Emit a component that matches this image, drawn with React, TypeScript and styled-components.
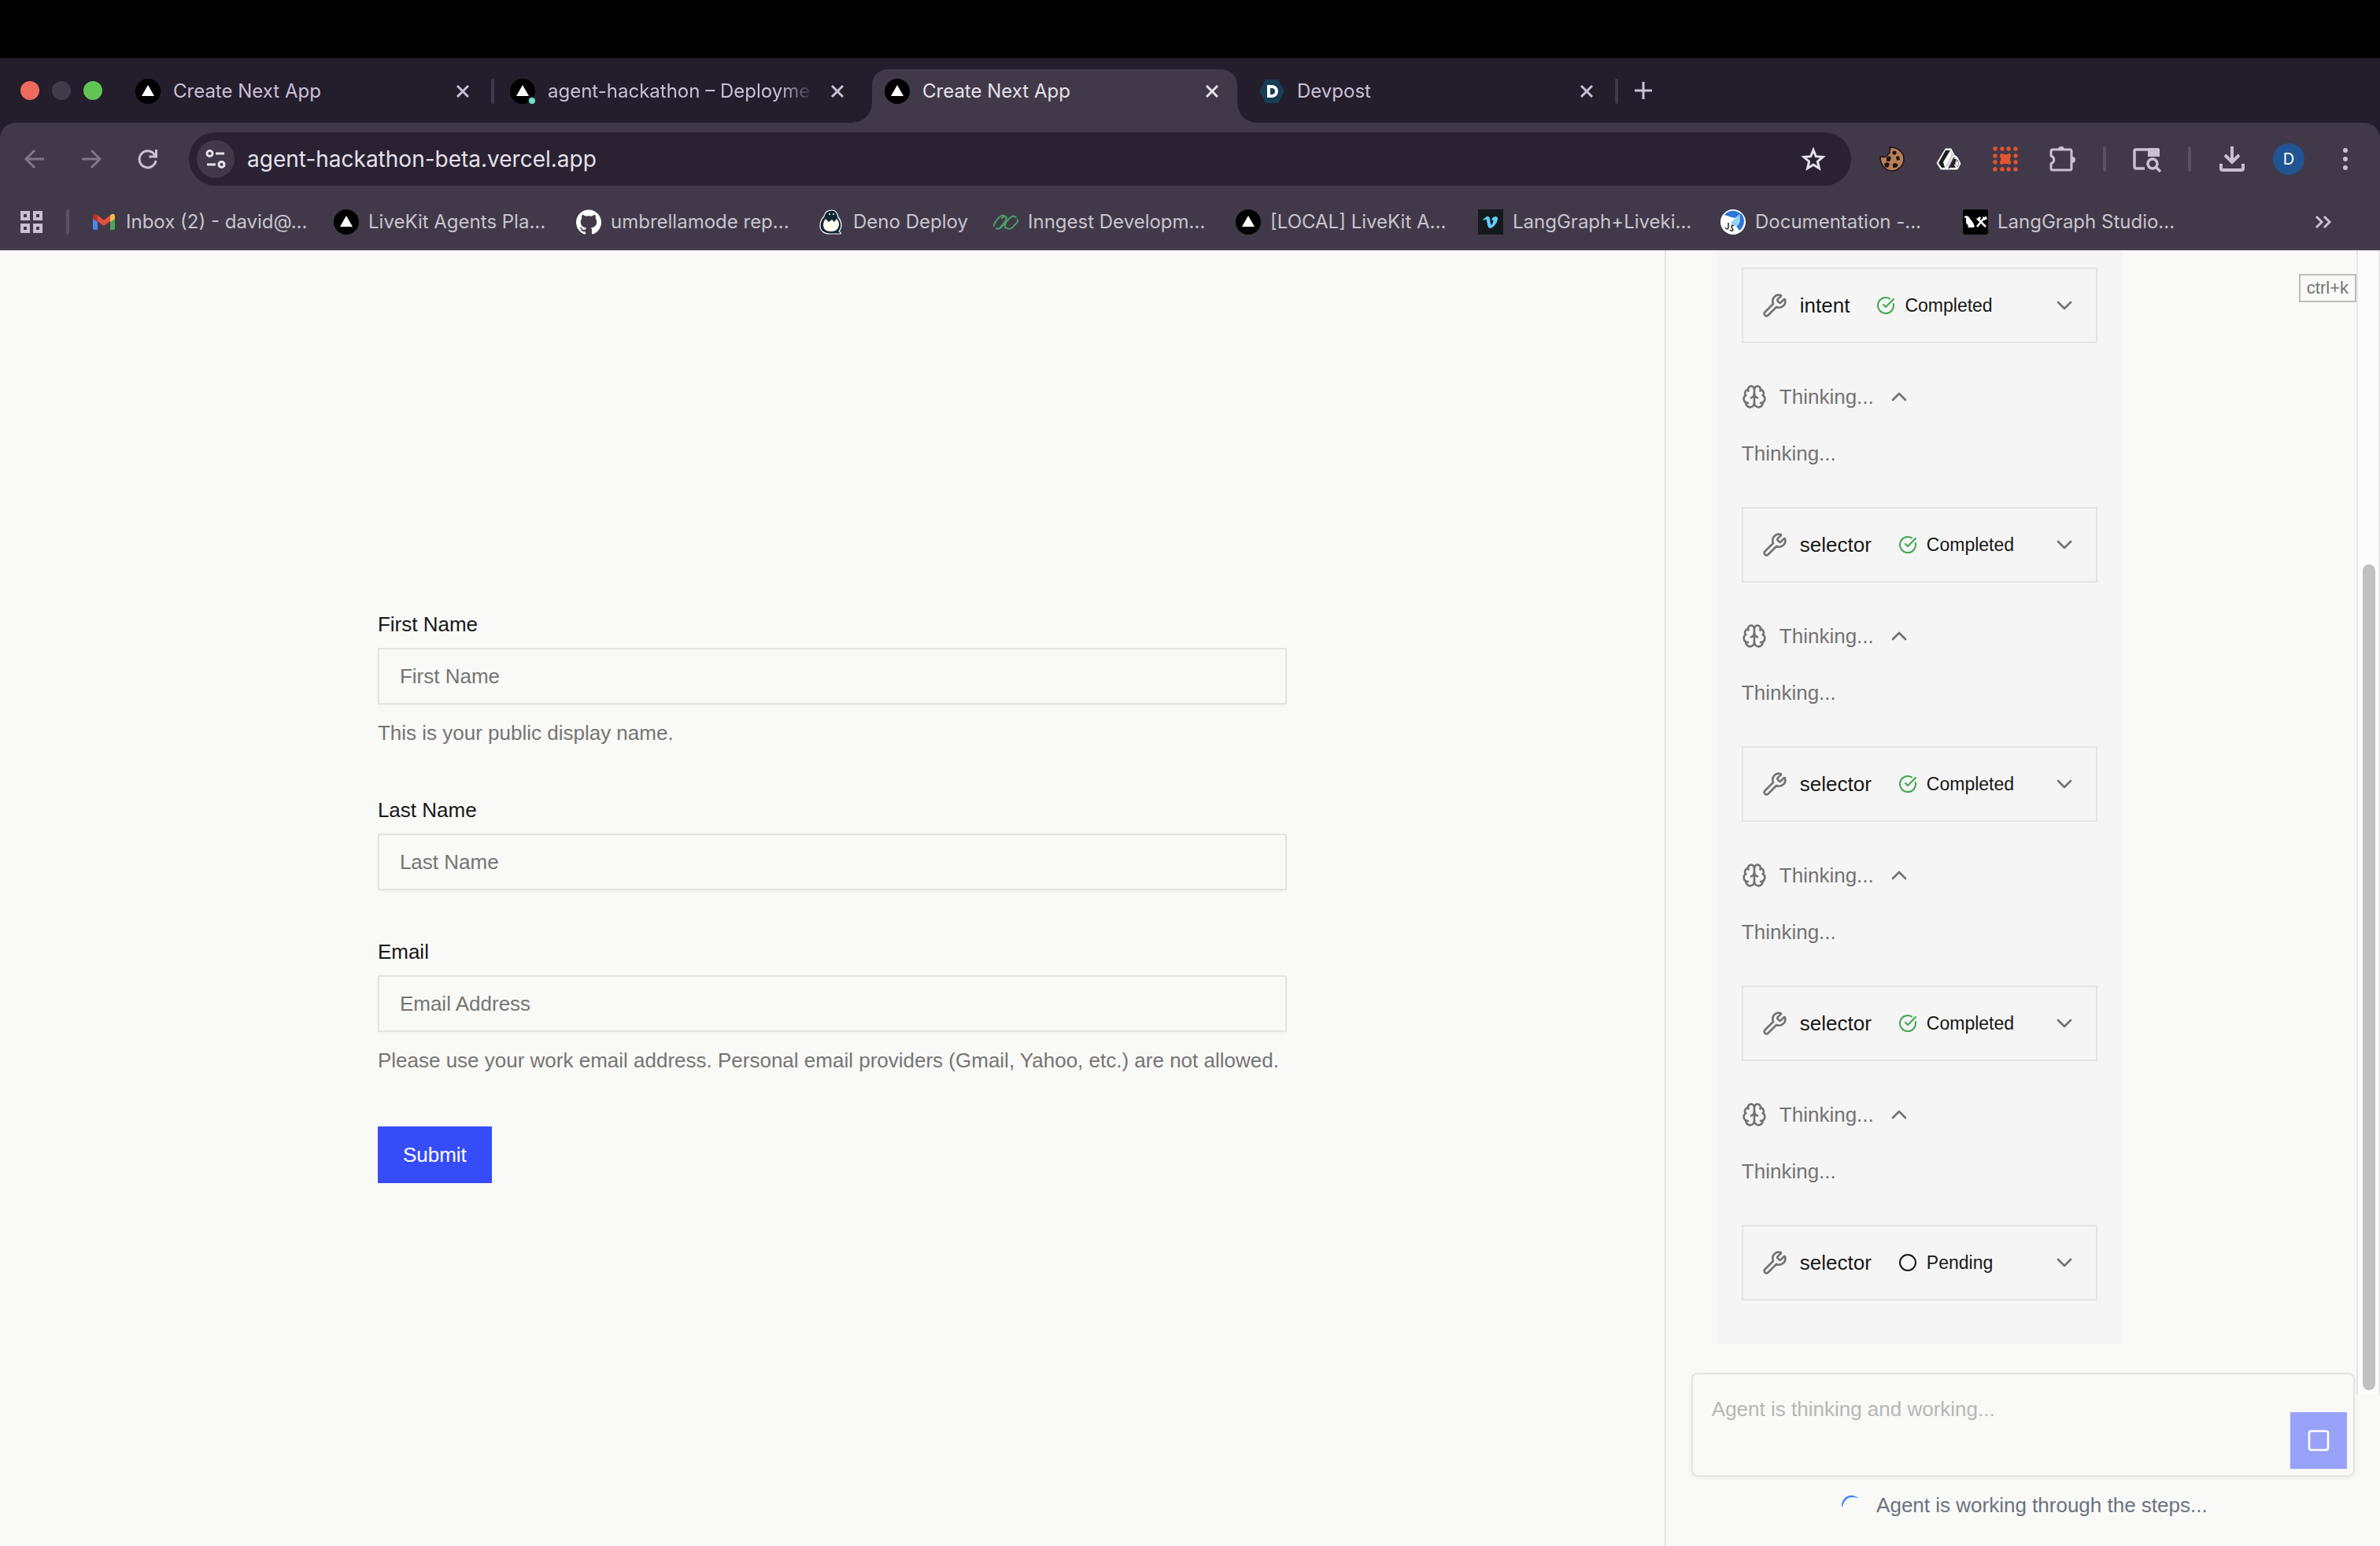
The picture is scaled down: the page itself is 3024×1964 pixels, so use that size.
import React, { ReactNode } from "react";
import styled, { createGlobalStyle, css } from "styled-components";
import { Wrench, Brain, ChevronDown, ChevronUp, CircleCheckBig, Circle, Square } from "lucide-react";
import { SiGithub } from "react-icons/si";

const Global = createGlobalStyle`
  *, *::before, *::after { box-sizing: border-box; }
  html, body, #root { height: 100%; }
  body { margin: 0; background: #f9f9f7; overflow: hidden; }
  button, input, textarea { font: inherit; color: inherit; margin: 0; }
  button { padding: 0; border: 0; background: none; cursor: pointer; }
  svg { display: block; flex: none; }
`;

const Screen = styled.div`
  height: 100vh;
  display: flex;
  flex-direction: column;
  background: #f9f9f7;
`;

/* ---------- browser chrome ---------- */

const MenuBar = styled.div`
  flex: none;
  height: 74px;
  background: #000;
`;

const Chrome = styled.header`
  flex: none;
  background: #241d2c;
  font-family: Inter, "Noto Sans", sans-serif;
  color: #c9c0d6;
`;

const TabStrip = styled.div`
  display: flex;
  height: 82px;
  padding: 14px 0 0 26px;
`;

const Lights = styled.div`
  display: flex;
  gap: 16px;
  width: 130px;
  padding-top: 15px;
`;

const Light = styled.button<{ $color: string }>`
  width: 24px;
  height: 24px;
  border-radius: 50%;
  background: ${(p) => p.$color};
`;

const Tab = styled.div<{ $active?: boolean }>`
  position: relative;
  flex: none;
  display: flex;
  align-items: center;
  gap: 16px;
  width: 464px;
  height: 68px;
  margin-right: 12px;
  padding: 0 24px 12px 16px;
  font-size: 24px;
  line-height: 32px;
  ${(p) =>
    p.$active &&
    css`
      color: #e6e1ea;
      background: #413949;
      border-radius: 20px 20px 0 0;
      &::before,
      &::after {
        content: "";
        position: absolute;
        bottom: 0;
        width: 24px;
        height: 24px;
      }
      &::before {
        left: -24px;
        background: radial-gradient(circle at 0 0, transparent 23px, #413949 24px);
      }
      &::after {
        right: -24px;
        background: radial-gradient(circle at 100% 0, transparent 23px, #413949 24px);
      }
    `}
`;

const TabTitle = styled.span<{ $fade?: boolean }>`
  flex: 1;
  min-width: 0;
  white-space: nowrap;
  ${(p) => p.$fade && css`mask-image: linear-gradient(90deg, #000 86%, transparent 98%);`}
`;

const TabEdge = styled.span`
  position: absolute;
  right: -8px;
  top: 12px;
  width: 4px;
  height: 32px;
  border-radius: 2px;
  background: #413949;
`;

const NewTab = styled.button`
  width: 32px;
  height: 56px;
  margin-left: 12px;
`;

const Toolbar = styled.div`
  display: flex;
  align-items: center;
  height: 92px;
  padding: 0 24px;
  background: #413949;
  border-radius: 20px 20px 0 0;
`;

const NavButtons = styled.div`
  display: flex;
  gap: 32px;
  width: 216px;
`;

const IconButton = styled.button<{ $dim?: boolean }>`
  display: grid;
  place-items: center;
  min-width: 40px;
  height: 40px;
  opacity: ${(p) => (p.$dim ? 0.45 : 1)};
`;

const Omnibox = styled.div`
  flex: 1;
  display: flex;
  align-items: center;
  gap: 16px;
  height: 68px;
  padding: 0 28px 0 10px;
  border-radius: 34px;
  background: #2a2233;
  color: #e6e1ea;
`;

const SiteInfo = styled.button`
  display: grid;
  place-items: center;
  width: 48px;
  height: 48px;
  border-radius: 50%;
  background: #413949;
`;

const Address = styled.input`
  flex: 1;
  min-width: 0;
  padding: 0;
  border: 0;
  outline: 0;
  background: none;
  font-size: 28px;
  line-height: 36px;
`;

const Extensions = styled.div`
  display: flex;
  align-items: center;
  gap: 32px;
  padding-left: 32px;
`;

const Rule = styled.span`
  flex: none;
  width: 4px;
  height: 32px;
  border-radius: 2px;
  background: #5b5166;
`;

const Avatar = styled.button`
  width: 40px;
  height: 40px;
  border-radius: 50%;
  background: #205493;
  color: #fff;
  font-size: 20px;
`;

const Bookmarks = styled.nav`
  display: flex;
  align-items: center;
  height: 70px;
  padding: 0 56px 0 24px;
  background: #413949;
  border-bottom: 2px solid #4c4454;
`;

const BookmarkRule = styled(Rule)`
  margin: 0 28px;
`;

const Bookmark = styled.a<{ $short?: boolean }>`
  flex: none;
  display: flex;
  align-items: center;
  gap: 12px;
  width: ${(p) => (p.$short ? 222 : 308)}px;
  font-size: 24px;
  line-height: 32px;
  color: #c9c4ce;
  text-decoration: none;
  white-space: nowrap;
`;

const More = styled.button`
  margin-left: auto;
`;

/* ---------- page ---------- */

const Page = styled.main`
  flex: 1;
  min-height: 0;
  display: grid;
  grid-template-columns: minmax(0, 1fr) calc(30% + 2px);
  font-family: "Liberation Sans", Arial, sans-serif;
  font-size: 26px;
  line-height: 40px;
  color: #171717;
`;

const FormPane = styled.section`
  display: grid;
  place-content: center;
`;

const Form = styled.form`
  display: flex;
  flex-direction: column;
  align-items: flex-start;
  gap: 64px;
  min-width: 1155px;
`;

const FieldBox = styled.div`
  display: flex;
  flex-direction: column;
  gap: 16px;
  width: 100%;
`;

const Label = styled.label`
  line-height: 28px;
`;

const TextInput = styled.input`
  width: 100%;
  height: 72px;
  padding: 0 26px;
  border: 2px solid #e4e4e2;
  background: transparent;
  outline: 0;
  box-shadow: 0 2px 4px rgba(0, 0, 0, 0.03);
  &::placeholder { color: #757573; opacity: 1; }
`;

const Hint = styled.p`
  margin: 0;
  color: #757573;
`;

const Submit = styled.button`
  height: 72px;
  padding: 0 32px;
  background: #364cf8;
  color: #fff;
`;

const ChatPane = styled.aside`
  position: relative;
  min-width: 0;
  min-height: 0;
  display: flex;
  flex-direction: column;
  border-left: 2px solid #e4e4e2;
`;

const Conversation = styled.div`
  flex: 1;
  min-height: 0;
  overflow: hidden;
  display: flex;
  flex-direction: column;
  justify-content: flex-end;
  padding: 0 64px 36px;
`;

const Message = styled.article`
  display: flex;
  flex-direction: column;
  gap: 48px;
  width: 516px;
  padding: 32px 32px 56px;
  background: #f5f5f5;
`;

const Tool = styled.button`
  display: flex;
  align-items: center;
  height: 96px;
  padding: 0 24px;
  border: 2px solid #e4e4e4;
  text-align: left;
`;

const ToolName = styled.span`
  margin: 0 34px 0 16px;
`;

const Status = styled.span`
  flex: 1;
  display: flex;
  align-items: center;
  gap: 12px;
  font-size: 23px;
  line-height: 32px;
`;

const Reasoning = styled.div`
  display: flex;
  flex-direction: column;
  align-items: flex-start;
  gap: 32px;
  color: #737373;
`;

const ReasoningToggle = styled.button`
  display: flex;
  align-items: center;
  gap: 16px;
`;

const Shortcut = styled.kbd`
  position: absolute;
  top: 30px;
  right: 30px;
  height: 36px;
  padding: 0 8px;
  border: 2px solid #bdbdbb;
  font: 22px/32px "Liberation Sans", Arial, sans-serif;
  color: #737373;
`;

const ScrollTrack = styled.div`
  position: absolute;
  top: 0;
  right: 0;
  bottom: 192px;
  width: 30px;
  background: #fcfcfc;
  border: solid #e8e8e8;
  border-width: 0 2px;
`;

const ScrollThumb = styled.div`
  position: absolute;
  top: 399px;
  right: 4px;
  bottom: 6px;
  width: 16px;
  border-radius: 8px;
  background: #c1c1c1;
`;

const Composer = styled.form`
  position: relative;
  z-index: 1;
  display: flex;
  align-items: flex-end;
  height: 132px;
  margin: 0 32px;
  padding: 0 8px 8px 0;
  border: 2px solid #e4e4e2;
  border-radius: 8px;
  background: #f9f9f7;
  box-shadow: 0 2px 6px rgba(0, 0, 0, 0.06);
`;

const Prompt = styled.textarea`
  flex: 1;
  height: 120px;
  padding: 24px;
  border: 0;
  outline: 0;
  resize: none;
  background: none;
  &::placeholder { color: #b7b7b5; opacity: 1; }
`;

const Stop = styled.button`
  display: grid;
  place-items: center;
  width: 72px;
  height: 72px;
  background: #98a2f8;
  color: #fff;
`;

const Working = styled.p`
  display: flex;
  align-items: center;
  justify-content: center;
  gap: 16px;
  margin: 0;
  padding: 16px 0 32px;
  color: #6b7280;
`;

/* ---------- drawings ---------- */

const VercelMark = ({ dot }: { dot?: boolean }) => (
  <svg width="32" height="32" viewBox="0 0 32 32" aria-hidden>
    <circle cx="16" cy="16" r="16" fill="#000" />
    <path d="M16 8l8 14H8z" fill="#fff" />
    {dot && <circle cx="28" cy="28" r="5" fill="#6fe0c8" stroke="#241d2c" strokeWidth="2" />}
  </svg>
);

const DevpostMark = () => (
  <svg width="32" height="32" viewBox="0 0 32 32" aria-hidden>
    <path d="M8 1h16l8 15-8 15H8L0 16z" fill="#173f54" />
    <path d="M10 8h6a8 8 0 010 16h-6zM14 12v8h2a4 4 0 000-8z" fill="#fff" fillRule="evenodd" />
  </svg>
);

const Line = ({ d, size = 32, w = 3, view = 32 }: { d: string; size?: number; w?: number; view?: number }) => (
  <svg width={size} height={size} viewBox={`0 0 ${view} ${view}`} fill="none" stroke="currentColor" strokeWidth={w} aria-hidden>
    <path d={d} />
  </svg>
);

const CloseIcon = () => <Line size={16} view={16} w={3} d="M1 1l14 14M15 1L1 15" />;

const CookieIcon = () => (
  <svg width="32" height="32" viewBox="0 0 32 32" aria-hidden>
    <path d="M13 1c2 3-1 4 0 7-1 2-3 2-3 4-3 3-6 1-9 1 0 11 7 18 15 18s15-7 15-15S24 1 13 1z" fill="#b87f5b" stroke="#1c1512" strokeWidth="1.500" />
    <g fill="#1c1512">
      <circle cx="19" cy="8" r="2.600" />
      <path d="M9 14l4-2 2 3-2 4h-4zM21 13l4-1 1 5-4 1zM6 22l4-2 3 2-2 5-4-1zM17 22l4-1 3 3-3 3h-4z" />
    </g>
  </svg>
);

const PrismIcon = () => (
  <svg width="32" height="32" viewBox="0 0 32 32" strokeLinejoin="round" aria-hidden>
    <path d="M12 3h7l4 8 4 3 4 8-4 7H6l-5-8z" fill="#fff" stroke="#fff" strokeWidth="1" />
    <path d="M12 5h6L9 20l2 7H7l-4-6z" fill="#1d1f21" />
    <path d="M19 6l3 5-8 15-3 1 8-15z" fill="#413949" opacity=".25" />
    <path d="M17 27l5-11h4l-3 8 2 3z" fill="#1d1f21" />
    <path d="M16 28l7-14" stroke="#413949" strokeWidth="2" />
    <path d="M27 17l2 5-2 4-3-3z" fill="#fff" stroke="#1d1f21" strokeWidth=".6" />
  </svg>
);

const GridIcon = () => (
  <svg width="32" height="32" viewBox="0 0 32 32" fill="#e2552d" aria-hidden>
    {[3, 12, 20, 29].flatMap((y) =>
      [3, 12, 20, 29].map((x) => <circle key={`${x}-${y}`} cx={x} cy={y} r="2.700" />)
    )}
    <path d="M10 9l3 1h6l3-1 1 3-1 3v3l1 3-1 2-3-1h-6l-3 1-1-2 1-3v-3l-1-3z" />
  </svg>
);

const PuzzleIcon = () => (
  <svg width="36" height="36" viewBox="0 0 36 36" aria-hidden>
    <path d="M4 8a2 2 0 012-2h22a2 2 0 012 2v22a2 2 0 01-2 2H6a2 2 0 01-2-2v-6c5-2 5-8 0-10z" fill="none" stroke="currentColor" strokeWidth="3" strokeLinejoin="round" />
    <path d="M13 6a4 4 0 018 0zM31 15a4 4 0 010 8z" fill="currentColor" />
  </svg>
);

const TabSearchIcon = () => (
  <svg width="36" height="36" viewBox="0 0 36 36" fill="none" stroke="currentColor" strokeWidth="3.500" aria-hidden>
    <path d="M15 30H4a2 2 0 01-2-2V8a2 2 0 012-2h28" />
    <path d="M19 4h13a2 2 0 012 2v9H19z" fill="currentColor" stroke="none" />
    <circle cx="25" cy="24" r="6" />
    <path d="M29 28l6 6" />
  </svg>
);

const DownloadIcon = () => (
  <svg width="36" height="36" viewBox="0 0 36 36" fill="none" stroke="currentColor" strokeWidth="4" aria-hidden>
    <path d="M18 2v19M9 13l9 9 9-9" />
    <path d="M4 24v6a2 2 0 002 2h24a2 2 0 002-2v-6" />
  </svg>
);

const GmailIcon = () => (
  <svg width="32" height="32" viewBox="0 0 32 32" aria-hidden>
    <path d="M2 9v15a2 2 0 002 2h4V14z" fill="#4f86ec" />
    <path d="M30 9v15a2 2 0 01-2 2h-4V14z" fill="#4fa65a" />
    <path d="M24 7.500l2-1.500c2-1 4 0 4 3v3l-6 4z" fill="#f2bd42" />
    <path d="M8 7.500L6 6C4 5 2 6 2 9v3l6 4z" fill="#b5332a" />
    <path d="M8 7.500l8 6 8-6V15l-8 6-8-6z" fill="#e0503f" />
  </svg>
);

const DenoIcon = () => (
  <svg width="32" height="32" viewBox="0 0 32 32" aria-hidden>
    <path d="M17 1C11 1 8 4 7 9c-3 3-5 7-5 12 0 6 5 10 12 10h14c1-1 0-2-2-3 4-5 4-12-1-18-1-6-3-9-8-9z" fill="#0f2735" stroke="#fff" strokeWidth="1.200" />
    <path d="M9 12l4 4 4-3 3 3 3-4c3 3 4 7 2 11-2 5-7 5-10 5-5 0-9-3-9-8 0-3 1-6 3-8z" fill="#fffdf0" />
    <circle cx="14" cy="6" r="1" fill="#fff" /><circle cx="19" cy="6" r="1" fill="#fff" />
  </svg>
);

const InngestIcon = () => (
  <svg width="32" height="32" viewBox="0 0 32 32" fill="none" stroke="#4c9e68" strokeWidth="2" strokeLinecap="round" aria-hidden>
    <path d="M1 21c-1-3 2-5 4-8 4-5 6-6 9-5M4 24c4 2 6-1 8-3l8-9c3-4 7-4 9-2" />
    <path d="M17 11c-1-3-3-3-6 0M31 13c1 3-2 5-4 7-3 4-6 6-9 4M16 18c-2 3-1 6 2 6M16 12c1 2-1 4-3 6l-4 5" />
  </svg>
);

const VimeoIcon = () => (
  <svg width="32" height="32" viewBox="0 0 32 32" aria-hidden>
    <path d="M0 0h32v32H0z" fill="#15191d" />
    <path d="M6 13l5-4c4-1 4 3 5 9 1 3 2 1 3-2 1-2 0-3-2-2 1-5 8-7 8-2 0 4-5 11-9 12-4 0-4-5-5-10-1-2-2-1-4 0z" fill="#62cdfb" />
  </svg>
);

const DocsIcon = () => (
  <svg width="32" height="32" viewBox="0 0 32 32" aria-hidden>
    <circle cx="16" cy="16" r="16" fill="#fff" />
    <path d="M5 7a14 14 0 0121-1l-8 5-4-1z" fill="#2f74d6" />
    <path d="M26 5c6 6 5 17-2 22l-6-9z" fill="#2f74d6" />
    <path d="M24 6L13 17l7 5c5-3 6-9 4-16z" fill="#8fd3fa" />
    <path d="M10 17v6c0 3-3 2-4 0M17 21c-3-2-4 1-2 3s0 5-3 2" fill="none" stroke="#222" strokeWidth="1.500" />
  </svg>
);

const LangGraphIcon = () => (
  <svg width="32" height="32" viewBox="0 0 32 32" aria-hidden>
    <rect width="32" height="32" rx="3" fill="#000" />
    <path d="M1 10l3-2 3 1 6 8 2 5-2 1H6l1-2-3-4V11z" fill="#fff" />
    <path d="M18 22l9-11M20 13l9 9" stroke="#fff" strokeWidth="2.500" fill="none" />
    <path d="M17 12l5-3 1 2-3 4zM25 9l3 1 1-2 2 4-4 2z" fill="#fff" />
  </svg>
);

const AppsIcon = () => <Line size={32} w={4} d="M4 4h8v8H4zM20 4h8v8h-8zM4 20h8v8H4zM20 20h8v8h-8z" />;

const TuneIcon = () => (
  <Line size={32} w={3} d="M5 9a3.500 3.500 0 107 0 3.500 3.500 0 10-7 0M16 9h11M20 23a3.500 3.500 0 107 0 3.500 3.500 0 10-7 0M5 23h11" />
);

const StarIcon = () => (
  <svg width="32" height="32" viewBox="0 0 32 32" fill="none" stroke="currentColor" strokeWidth="3" aria-hidden>
    <path d="M16 4.500l3.300 8.200 8.800.7-6.700 5.800 2 8.600-7.400-4.600-7.400 4.600 2-8.600-6.700-5.800 8.800-.7z" />
  </svg>
);

const SpinnerIcon = () => (
  <svg width="32" height="32" viewBox="0 0 32 32" aria-hidden>
    <path d="M4 18C3 8 15-2 26 8 15 3 7 8 5 18z" fill="#3b82f6" />
  </svg>
);

/* ---------- content ---------- */

const tabs: { title: string; icon: ReactNode; active?: boolean; edge?: boolean; fade?: boolean }[] = [
  { title: "Create Next App", icon: <VercelMark />, edge: true },
  { title: "agent-hackathon – Deployme", icon: <VercelMark dot />, fade: true },
  { title: "Create Next App", icon: <VercelMark />, active: true },
  { title: "Devpost", icon: <DevpostMark />, edge: true },
];

const bookmarks: { title: string; icon: ReactNode; short?: boolean }[] = [
  { title: "Inbox (2) - david@...", icon: <GmailIcon /> },
  { title: "LiveKit Agents Pla...", icon: <VercelMark /> },
  { title: "umbrellamode rep...", icon: <SiGithub size={32} color="#fff" /> },
  { title: "Deno Deploy", icon: <DenoIcon />, short: true },
  { title: "Inngest Developm...", icon: <InngestIcon /> },
  { title: "[LOCAL] LiveKit A...", icon: <VercelMark /> },
  { title: "LangGraph+Liveki...", icon: <VimeoIcon /> },
  { title: "Documentation -...", icon: <DocsIcon /> },
  { title: "LangGraph Studio...", icon: <LangGraphIcon /> },
];

const steps = [
  { name: "intent", done: true },
  { name: "selector", done: true },
  { name: "selector", done: true },
  { name: "selector", done: true },
  { name: "selector", done: false },
];

const fields = [
  { id: "first", label: "First Name", placeholder: "First Name", hint: "This is your public display name." },
  { id: "last", label: "Last Name", placeholder: "Last Name" },
  {
    id: "email",
    label: "Email",
    placeholder: "Email Address",
    hint: "Please use your work email address. Personal email providers (Gmail, Yahoo, etc.) are not allowed.",
  },
];

export default function App() {
  return (
    <Screen>
      <Global />
      <MenuBar />
      <Chrome>
        <TabStrip>
          <Lights>
            <Light $color="#ed6a5e" aria-label="Close window" />
            <Light $color="#433b4b" aria-label="Minimize window" />
            <Light $color="#61c554" aria-label="Zoom window" />
          </Lights>
          {tabs.map((t, i) => (
            <Tab key={i} $active={t.active}>
              {t.icon}
              <TabTitle $fade={t.fade}>{t.title}</TabTitle>
              <button aria-label="Close tab"><CloseIcon /></button>
              {t.edge && <TabEdge />}
            </Tab>
          ))}
          <NewTab aria-label="New tab"><Line d="M16 4v22M5 15h22" /></NewTab>
        </TabStrip>
        <Toolbar>
          <NavButtons>
            <IconButton $dim aria-label="Back"><Line d="M28 16H6M16 5L5 16l11 11" /></IconButton>
            <IconButton $dim aria-label="Forward"><Line d="M4 16h22M16 5l11 11-11 11" /></IconButton>
            <IconButton aria-label="Reload"><Line d="M26 18a10.500 10.500 0 11-2-8l3 3M26.500 4v9h-9" /></IconButton>
          </NavButtons>
          <Omnibox>
            <SiteInfo aria-label="Site information"><TuneIcon /></SiteInfo>
            <Address aria-label="Address" defaultValue="agent-hackathon-beta.vercel.app" />
            <IconButton aria-label="Bookmark this tab"><StarIcon /></IconButton>
          </Omnibox>
          <Extensions>
            <IconButton aria-label="Cookies"><CookieIcon /></IconButton>
            <IconButton aria-label="Prism"><PrismIcon /></IconButton>
            <IconButton aria-label="Grid"><GridIcon /></IconButton>
            <IconButton aria-label="Extensions"><PuzzleIcon /></IconButton>
            <Rule />
            <IconButton aria-label="Search tabs"><TabSearchIcon /></IconButton>
            <Rule />
            <IconButton aria-label="Downloads"><DownloadIcon /></IconButton>
            <Avatar aria-label="Profile">D</Avatar>
            <IconButton aria-label="Menu">
              <svg width="8" height="32" viewBox="0 0 8 32" fill="currentColor" aria-hidden>
                <circle cx="4" cy="5" r="3" /><circle cx="4" cy="16" r="3" /><circle cx="4" cy="27" r="3" />
              </svg>
            </IconButton>
          </Extensions>
        </Toolbar>
        <Bookmarks>
          <button aria-label="Apps"><AppsIcon /></button>
          <BookmarkRule />
          {bookmarks.map((b) => (
            <Bookmark key={b.title} href="#" $short={b.short}>
              {b.icon}
              {b.title}
            </Bookmark>
          ))}
          <More aria-label="More bookmarks"><Line size={32} w={3} d="M7 9l7 7-7 7M17 9l7 7-7 7" /></More>
        </Bookmarks>
      </Chrome>
      <Page>
        <FormPane>
          <Form onSubmit={(e) => e.preventDefault()}>
            {fields.map((f) => (
              <FieldBox key={f.id}>
                <Label htmlFor={f.id}>{f.label}</Label>
                <TextInput id={f.id} placeholder={f.placeholder} />
                {f.hint && <Hint>{f.hint}</Hint>}
              </FieldBox>
            ))}
            <Submit type="submit">Submit</Submit>
          </Form>
        </FormPane>
        <ChatPane>
          <Conversation>
            <Message>
              {steps.map((s, i) => (
                <React.Fragment key={i}>
                  {i > 0 && (
                    <Reasoning>
                      <ReasoningToggle>
                        <Brain size={32} />
                        Thinking...
                        <ChevronUp size={32} />
                      </ReasoningToggle>
                      <span>Thinking...</span>
                    </Reasoning>
                  )}
                  <Tool>
                    <Wrench size={32} color="#737373" />
                    <ToolName>{s.name}</ToolName>
                    <Status>
                      {s.done ? <CircleCheckBig size={24} color="#3fa64b" /> : <Circle size={24} />}
                      {s.done ? "Completed" : "Pending"}
                    </Status>
                    <ChevronDown size={32} color="#737373" />
                  </Tool>
                </React.Fragment>
              ))}
            </Message>
          </Conversation>
          <Shortcut>ctrl+k</Shortcut>
          <ScrollTrack><ScrollThumb /></ScrollTrack>
          <Composer onSubmit={(e) => e.preventDefault()}>
            <Prompt aria-label="Message" placeholder="Agent is thinking and working..." />
            <Stop aria-label="Stop"><Square size={32} /></Stop>
          </Composer>
          <Working>
            <SpinnerIcon />
            Agent is working through the steps...
          </Working>
        </ChatPane>
      </Page>
    </Screen>
  );
}
